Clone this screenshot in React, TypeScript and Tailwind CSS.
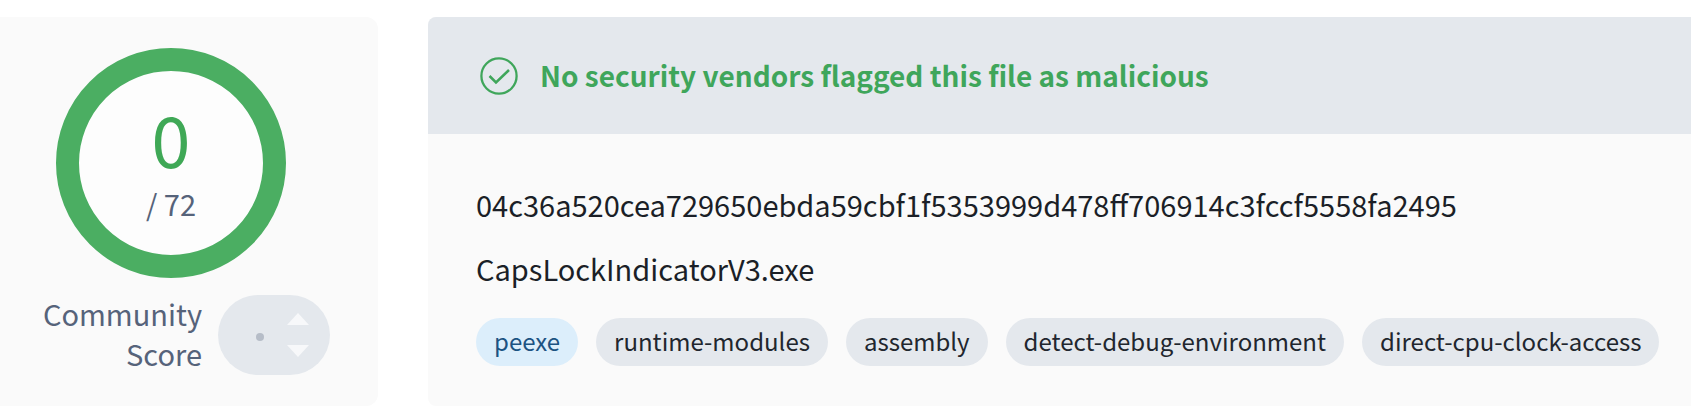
import React from 'react';

const App = () => {
  // File tags
  const tags = [
    { id: 1, name: "peexe", style: "bg-[#dceefb] text-[#1c5382]" },
    { id: 2, name: "runtime-modules", style: "bg-[#e4e8ed] text-[#21262e]" },
    { id: 3, name: "assembly", style: "bg-[#e4e8ed] text-[#21262e]" },
    { id: 4, name: "detect-debug-environment", style: "bg-[#e4e8ed] text-[#21262e]" },
    { id: 5, name: "direct-cpu-clock-access", style: "bg-[#e4e8ed] text-[#21262e]" },
  ];

  return (
    <div className="flex items-stretch bg-white pt-[17px] font-['Noto_Sans_CJK_SC','Noto_Sans',sans-serif] text-[29px] leading-10 text-[#1b1f27]">
      {/* Score */}
      <section className="w-[378px] shrink-0 rounded-r-xl bg-[#fafafa] pt-[31px]">
        <div className="ml-14 flex size-[230px] flex-col items-center rounded-full border-[23px] border-[#4bae62] bg-[#fdfdfd] pt-[22px]">
          <span className="text-[70px] leading-[90px] text-[#3fa856]">0</span>
          <span className="text-[#56637a]">/ 72</span>
        </div>
        <div className="mt-[15px] flex items-center gap-4">
          <p className="w-[202px] pb-1 pl-8 text-right text-[#56637a]">Community Score</p>
          <div className="flex h-20 w-28 items-center justify-between rounded-full bg-[#e4e8ed] pr-5 pl-[38px]">
            <span className="mt-1 size-2 rounded-full bg-[#b6bdc8]" />
            <svg className="h-11 w-6" viewBox="0 0 24 44" fill="#f7f8fa">
              <path d="M12 0 23 12H1z" />
              <path d="M12 44 23 32H1z" />
            </svg>
          </div>
        </div>
      </section>

      {/* File details */}
      <section className="ml-[50px] min-w-0 flex-1 overflow-hidden rounded-l-lg bg-[#fafafa]">
        <header className="flex h-[117px] items-center gap-[22px] bg-[#e4e8ed] pl-[52px] text-[#3fa65b]">
          <svg className="size-[38px] shrink-0" viewBox="0 0 38 38" fill="none" stroke="currentColor" strokeWidth="2.3">
            <circle cx="19" cy="19" r="17.6" />
            <path d="M9.5 19l6.5 6.5L29 13" strokeWidth="2.5" />
          </svg>
          <h1 className="pb-0.5 text-[28px] font-semibold">No security vendors flagged this file as malicious</h1>
        </header>
        <div className="px-12 pt-[50px] pb-10">
          <p>04c36a520cea729650ebda59cbf1f5353999d478ff706914c3fccf5558fa2495</p>
          <p className="mt-6">CapsLockIndicatorV3.exe</p>
          <ul className="mt-[30px] flex gap-[18px] text-2xl leading-[46px]">
            {tags.map((tag) => (
              <li key={tag.id} className={`rounded-full px-[18px] pb-0.5 whitespace-nowrap ${tag.style}`}>
                {tag.name}
              </li>
            ))}
          </ul>
        </div>
      </section>
    </div>
  );
};

export default App;
